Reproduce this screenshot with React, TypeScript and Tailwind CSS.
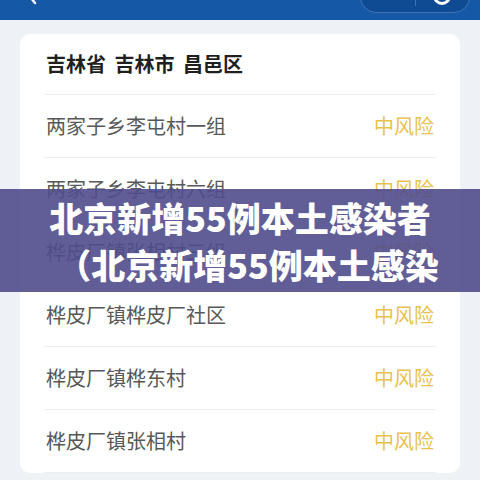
const rows = [
  '两家子乡李屯村一组',
  '两家子乡李屯村六组',
  '桦皮厂镇张相村三组',
  '桦皮厂镇桦皮厂社区',
  '桦皮厂镇桦东村',
  '桦皮厂镇张相村',
];

export default function App() {
  return (
    <div
      className="relative h-[480px] w-[480px] overflow-hidden bg-[#eef1f5]"
      style={{ fontFamily: '"Noto Sans CJK SC", "Noto Sans", sans-serif' }}
    >
      {/* 顶部导航 */}
      <div className="flex h-[20px] items-end justify-between overflow-hidden bg-[#1458a6] pl-[24px] pr-[10px]">
        <svg width="14" height="24" viewBox="0 0 14 24" className="mb-[15px]">
          <path d="M11 2 L3 12 L11 22" fill="none" stroke="white" strokeWidth="2.4" strokeLinecap="round" strokeLinejoin="round" />
        </svg>
        <div className="mb-[7px] flex h-[32px] w-[110px] items-center rounded-full border border-[#3d74b8] bg-[#0f4b93]">
          <div className="flex-1" />
          <div className="h-[18px] w-px bg-[#3d74b8]" />
          <div className="flex flex-1 items-center justify-center">
            <div className="mb-[2px] h-[18px] w-[18px] rounded-full border-[3px] border-white" />
          </div>
        </div>
      </div>

      {/* 卡片 */}
      <div className="mx-[20px] mt-[14px] rounded-[10px] bg-white px-[24px]">
        <div className="flex h-[61px] items-center border-b border-[#eeeeee] px-[2px] text-[20px] font-bold text-[#1f1f1f] [word-spacing:4px]">
          吉林省 吉林市 昌邑区
        </div>
        {rows.map((r) => (
          <div
            key={r}
            className="flex h-[63px] items-center justify-between border-b border-[#eeeeee] px-[2px] text-[20px]"
          >
            <span className="text-[#585858]">{r}</span>
            <span className="text-[#e8c24e]">中风险</span>
          </div>
        ))}
      </div>

      {/* 标题遮罩 */}
      <div className="absolute left-0 right-0 top-[189px] flex h-[103px] flex-col justify-center overflow-hidden bg-[rgba(80,76,140,0.9)] text-center text-[34px] font-black leading-[47px] text-white whitespace-nowrap">
        <div>北京新增55例本土感染者</div>
        <div className="pl-[16px]">（北京新增55例本土感染</div>
      </div>
    </div>
  );
}
